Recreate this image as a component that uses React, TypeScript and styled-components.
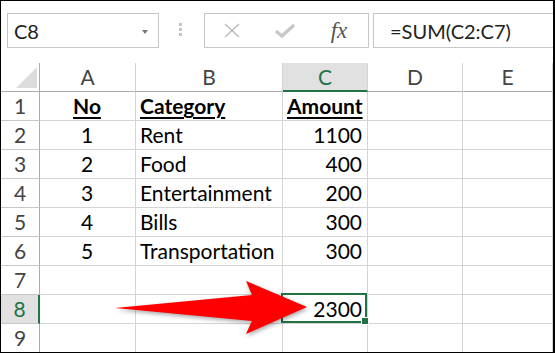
import styled, { createGlobalStyle } from "styled-components";

const GlobalStyle = createGlobalStyle`
  html, body {
    margin: 0;
    padding: 0;
    background: #fff;
  }
  body {
    font-family: Lato, "Liberation Sans", sans-serif;
  }
`;

const GREEN = "#217346";

const Frame = styled.div`
  position: relative;
  width: 555px;
  height: 353px;
  box-sizing: border-box;
  border-style: solid;
  border-color: #000;
  border-width: 1px 2px 1px 1px;
  background: #fff;
  overflow: hidden;
`;

const FormulaBar = styled.div`
  display: flex;
  align-items: flex-start;
  height: 62px;
  box-sizing: border-box;
  padding: 12px 0 0 6px;
`;

const NameBox = styled.div`
  width: 152px;
  height: 35px;
  box-sizing: border-box;
  border: 1px solid #c6c6c6;
  display: flex;
  align-items: center;
  justify-content: space-between;
  padding: 0 10px 0 6px;
  font-size: 20px;
  color: #222;
`;

const DropArrow = styled.span`
  width: 0;
  height: 0;
  border-left: 3px solid transparent;
  border-right: 3px solid transparent;
  border-top: 4px solid #777;
  margin-top: 2px;
`;

const Grip = styled.div`
  display: flex;
  flex-direction: column;
  gap: 2px;
  margin: 10px 22px 0 20px;
  span {
    width: 3px;
    height: 3px;
    background: #c4c4c4;
  }
`;

const ButtonBox = styled.div`
  width: 165px;
  height: 35px;
  box-sizing: border-box;
  border: 1px solid #c6c6c6;
  display: flex;
  align-items: center;
  justify-content: space-between;
  padding: 0 19px 0 18px;
`;

const Fx = styled.span`
  width: 20px;
  font-family: "Liberation Serif", serif;
  font-style: italic;
  font-size: 23px;
  color: #555;
  line-height: 1;
  text-align: center;
`;

const FormulaInput = styled.div`
  flex: 1;
  height: 35px;
  margin-left: 4px;
  box-sizing: border-box;
  border: 1px solid #c6c6c6;
  border-right: none;
  display: flex;
  align-items: center;
  padding-left: 16px;
  font-size: 20px;
  color: #222;
`;

const Sheet = styled.div`
  display: grid;
  grid-template-columns: 39px 96px 147px 85px 95px 1fr;
  grid-auto-rows: 29px;
`;

const Cell = styled.div<{ $align?: "left" | "center" | "right"; $bold?: boolean }>`
  position: relative;
  box-sizing: border-box;
  border-right: 1px solid #d4d4d4;
  border-bottom: 1px solid #d4d4d4;
  padding: 0 5px 0 4px;
  font-size: 21px;
  line-height: 28px;
  color: #000;
  white-space: nowrap;
  text-align: ${(p) => p.$align || "left"};
  font-weight: ${(p) => (p.$bold ? 700 : 400)};
  text-decoration: ${(p) => (p.$bold ? "underline" : "none")};
  text-decoration-thickness: 2px;
  text-underline-offset: 3px;
`;

const ColHeader = styled.div<{ $active?: boolean }>`
  box-sizing: border-box;
  border-right: 1px solid #d4d4d4;
  border-bottom: ${(p) => (p.$active ? `2px solid ${GREEN}` : "1px solid #ababab")};
  background: ${(p) => (p.$active ? "#e1e1e1" : "#fff")};
  color: ${(p) => (p.$active ? GREEN : "#444")};
  font-size: 21px;
  line-height: 28px;
  text-align: center;
`;

const RowHeader = styled.div<{ $active?: boolean }>`
  box-sizing: border-box;
  border-right: ${(p) => (p.$active ? `2px solid ${GREEN}` : "1px solid #ababab")};
  border-bottom: 1px solid #c8c8c8;
  background: ${(p) => (p.$active ? "#e1e1e1" : "#fff")};
  color: ${(p) => (p.$active ? GREEN : "#444")};
  font-size: 21px;
  line-height: 28px;
  text-align: center;
`;

const Corner = styled.div`
  box-sizing: border-box;
  border-right: 1px solid #ababab;
  border-bottom: 1px solid #ababab;
  display: flex;
  justify-content: flex-end;
  align-items: flex-end;
  padding: 0 2px 3px 0;
  &::after {
    content: "";
    width: 21px;
    height: 21px;
    background: #dcdcdc;
    clip-path: polygon(100% 0, 100% 100%, 0 100%);
  }
`;

const Selection = styled.div`
  position: absolute;
  top: -2px;
  left: -2px;
  right: 0;
  bottom: 0;
  border: 2px solid ${GREEN};
  z-index: 2;
  pointer-events: none;
`;

const FillHandle = styled.span`
  position: absolute;
  right: -4px;
  bottom: -4px;
  width: 6px;
  height: 6px;
  background: ${GREEN};
  border: 1px solid #fff;
`;

const ArrowLayer = styled.svg`
  position: absolute;
  top: -1px;
  left: -1px;
  width: 555px;
  height: 353px;
  pointer-events: none;
  z-index: 3;
  filter: drop-shadow(1px 2px 2px rgba(0, 0, 0, 0.35));
`;

const columns = ["A", "B", "C", "D", "E"];

type Row = [string, string, string];

const rows: Row[] = [
  ["No", "Category", "Amount"],
  ["1", "Rent", "1100"],
  ["2", "Food", "400"],
  ["3", "Entertainment", "200"],
  ["4", "Bills", "300"],
  ["5", "Transportation", "300"],
  ["", "", ""],
  ["", "", "2300"],
  ["", "", ""],
];

export default function App() {
  return (
    <>
      <GlobalStyle />
      <Frame>
        <FormulaBar>
          <NameBox>
            C8
            <DropArrow />
          </NameBox>
          <Grip>
            <span />
            <span />
            <span />
          </Grip>
          <ButtonBox>
            <svg width="18" height="15" viewBox="0 0 18 15">
              <path d="M2 1 L16 14 M16 1 L2 14" stroke="#bdbdbd" strokeWidth="1.6" fill="none" />
            </svg>
            <svg width="20" height="15" viewBox="0 0 20 15">
              <path d="M1 8 L7 13 L19 2" stroke="#c8c8c8" strokeWidth="3.4" fill="none" strokeLinejoin="miter" />
            </svg>
            <Fx>fx</Fx>
          </ButtonBox>
          <FormulaInput>=SUM(C2:C7)</FormulaInput>
        </FormulaBar>

        <Sheet>
          <Corner />
          {columns.map((c) => (
            <ColHeader key={c} $active={c === "C"}>
              {c}
            </ColHeader>
          ))}
          {rows.map((r, i) => {
            const n = i + 1;
            const head = n === 1;
            const selected = n === 8;
            return [
              <RowHeader key={`h${n}`} $active={selected}>
                {n}
              </RowHeader>,
              <Cell key={`a${n}`} $align="center" $bold={head}>
                {r[0]}
              </Cell>,
              <Cell key={`b${n}`} $bold={head}>
                {r[1]}
              </Cell>,
              <Cell key={`c${n}`} $align="right" $bold={head}>
                {r[2]}
                {selected && (
                  <Selection>
                    <FillHandle />
                  </Selection>
                )}
              </Cell>,
              <Cell key={`d${n}`} />,
              <Cell key={`e${n}`} />,
            ];
          })}
        </Sheet>

        <ArrowLayer viewBox="0 0 555 353">
          <path
            d="M115 308 L252 295 Q249 288 246 281 L307 307 L246 334 Q249 327 252 321 Z"
            fill="#ff0000"
          />
        </ArrowLayer>
      </Frame>
    </>
  );
}
